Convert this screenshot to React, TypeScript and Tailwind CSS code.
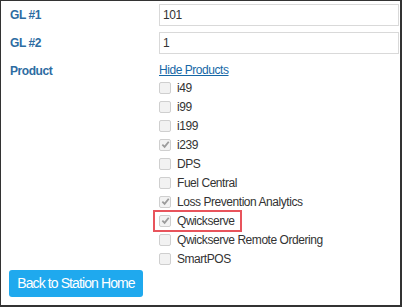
import React from 'react';

const products = [
  { name: 'i49', checked: false },
  { name: 'i99', checked: false },
  { name: 'i199', checked: false },
  { name: 'i239', checked: true },
  { name: 'DPS', checked: false },
  { name: 'Fuel Central', checked: false },
  { name: 'Loss Prevention Analytics', checked: true },
  { name: 'Qwickserve', checked: true, highlight: true },
  { name: 'Qwickserve Remote Ordering', checked: false },
  { name: 'SmartPOS', checked: false },
];

function Box({ checked }: { checked: boolean }) {
  return (
    <span className="flex h-[12px] w-[12px] shrink-0 items-center justify-center rounded-[2px] border border-[#cfcfcf] bg-[#f2f2f2]">
      {checked && (
        <svg width="9" height="9" viewBox="0 0 10 10">
          <path d="M1.5 5.2 L4 7.6 L8.6 2" fill="none" stroke="#9b9b9b" strokeWidth="2" />
        </svg>
      )}
    </span>
  );
}

export default function App() {
  return (
    <div className="box-border h-[307px] w-[402px] border-t border-l border-r-2 border-b-2 border-[#333] bg-white pl-[9px] font-['Liberation_Sans',Arial,sans-serif] text-[12px] tracking-[-0.45px] text-[#333]">
      {/* GL fields */}
      <div className="mt-[3px] flex items-center">
        <span className="w-[149px] font-bold text-[#2d6ca2]">GL #1</span>
        <div className="mr-[1px] flex h-[22px] w-[240px] items-center border border-[#d9d9d9] pl-[3px]">101</div>
      </div>
      <div className="mt-[6px] flex items-center">
        <span className="w-[149px] font-bold text-[#2d6ca2]">GL #2</span>
        <div className="mr-[1px] flex h-[22px] w-[240px] items-center border border-[#d9d9d9] pl-[3px]">1</div>
      </div>

      {/* Products */}
      <div className="mt-[8px] flex">
        <span className="w-[149px] pt-[1px] font-bold leading-[16px] text-[#2d6ca2]">Product</span>
        <div className="flex flex-col">
          <span className="leading-[16px] text-[#1567a6] underline">Hide Products</span>
          {products.map((p) => (
            <div key={p.name} className="flex h-[19px] items-center">
              {p.highlight ? (
                <span className="ml-[-6px] flex h-[22px] w-[89px] items-center border-2 border-[#e8545c] pl-[4px]">
                  <Box checked={p.checked} />
                  <span className="ml-[6px]">{p.name}</span>
                </span>
              ) : (
                <>
                  <Box checked={p.checked} />
                  <span className="ml-[6px]">{p.name}</span>
                </>
              )}
            </div>
          ))}
        </div>
      </div>

      <button className="mt-[2px] ml-[-1px] h-[27px] w-[134px] whitespace-nowrap rounded-[3px] bg-[#1fa9ee] text-[14px] tracking-[-0.9px] text-white">
        Back to Station Home
      </button>
    </div>
  );
}
